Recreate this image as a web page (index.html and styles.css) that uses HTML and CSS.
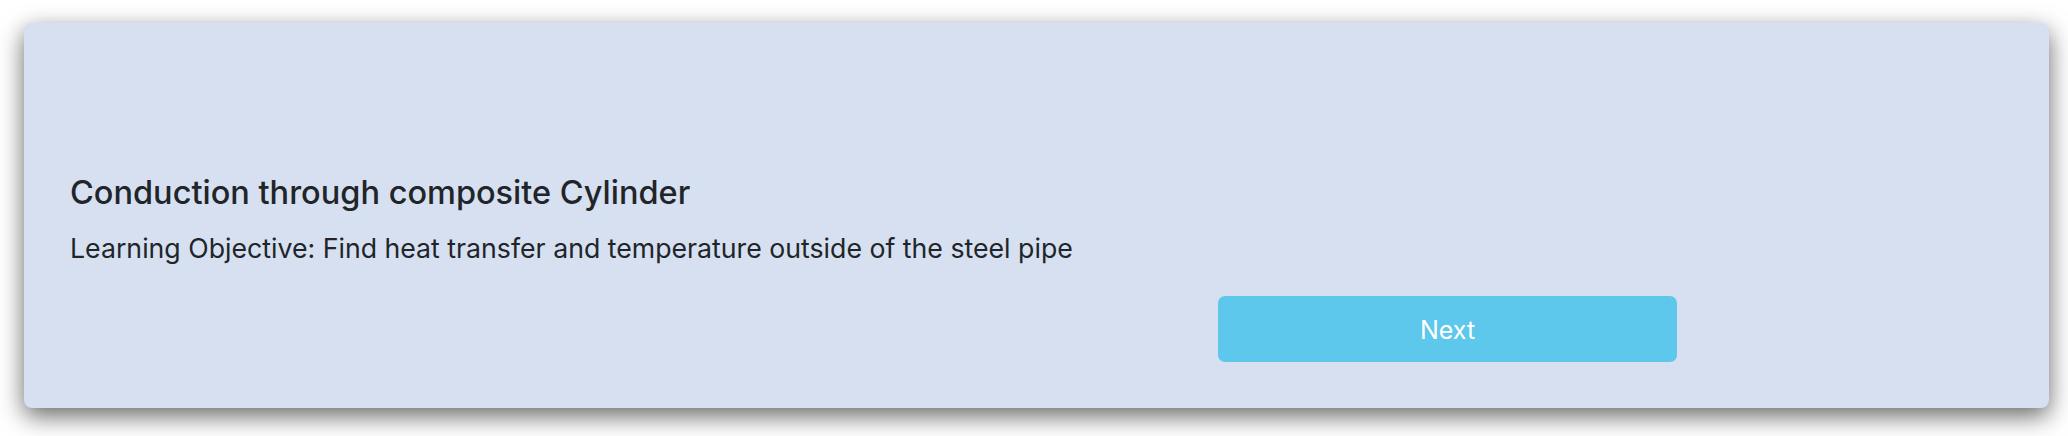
FILE: index.html
```html
<!DOCTYPE html>
<html lang="en">
<head>
<meta charset="utf-8">
<title>Conduction through composite Cylinder</title>
<link rel="stylesheet" href="styles.css">
</head>
<body>
<main class="page">
  <section class="card">
    <h4 class="card-title">Conduction through composite Cylinder</h4>
    <p class="card-text">Learning Objective: Find heat transfer and temperature outside of the steel pipe</p>
    <div class="actions">
      <button class="btn-next" type="button">Next</button>
    </div>
  </section>
</main>
</body>
</html>
```

FILE: styles.css
```css
html, body {
  margin: 0;
  padding: 0;
  background: #ffffff;
}

body {
  font-family: Inter, "Noto Sans", "Liberation Sans", sans-serif;
  color: #212529;
}

.page {
  box-sizing: border-box;
  min-height: 436px;
  padding: 23px 19px 28px 24px;
}

.card {
  box-sizing: border-box;
  height: 385px;
  background: #d6e0f0;
  border-radius: 8px;
  box-shadow: 0 8px 24px rgba(0, 0, 0, 0.6);
  padding: 150px 46px 46px 46px;
  display: flex;
  flex-direction: column;
}

.card-title {
  margin: 0 0 15px 0;
  font-size: 32.5px;
  line-height: 40px;
  font-weight: 500;
}

.card-text {
  margin: 0 0 27px 0;
  font-size: 26.7px;
  line-height: 41px;
  font-weight: 400;
}

.actions {
  display: grid;
  grid-template-columns: 1148px 459px 1fr;
}

.btn-next {
  grid-column: 2;
  height: 66px;
  padding: 2px 0 0 0;
  border: 0;
  border-radius: 7px;
  background: #5ec8ec;
  color: #ffffff;
  font-family: Inter, "Noto Sans", "Liberation Sans", sans-serif;
  font-size: 25px;
  font-weight: 400;
  cursor: pointer;
}
```
